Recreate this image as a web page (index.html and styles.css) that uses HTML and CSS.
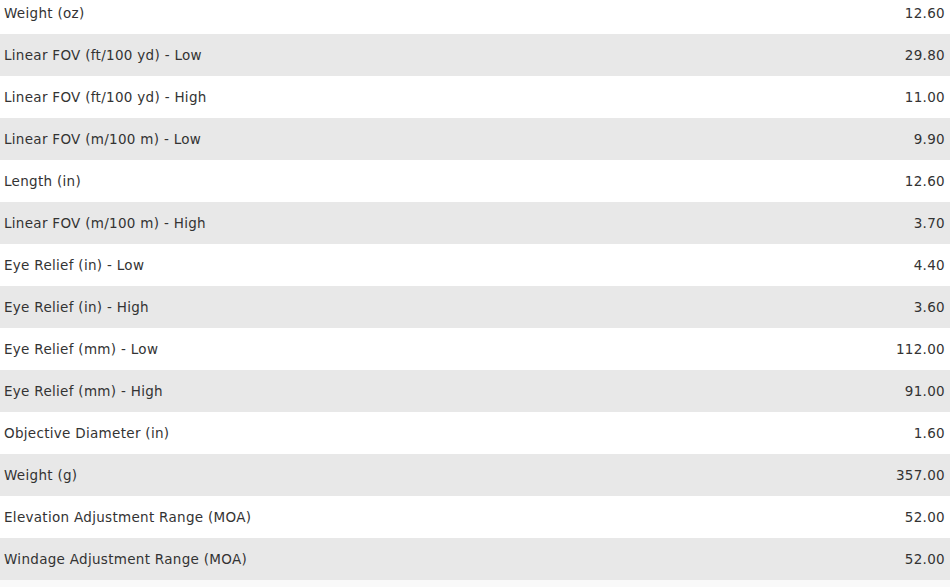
FILE: index.html
```html
<!DOCTYPE html>
<html>
<head>
<meta charset="utf-8">
<link rel="stylesheet" href="styles.css">
</head>
<body>
<div class="specs">
  <div class="row"><span class="label">Weight (oz)</span><span class="value">12.60</span></div>
  <div class="row"><span class="label">Linear FOV (ft/100 yd) - Low</span><span class="value">29.80</span></div>
  <div class="row"><span class="label">Linear FOV (ft/100 yd) - High</span><span class="value">11.00</span></div>
  <div class="row"><span class="label">Linear FOV (m/100 m) - Low</span><span class="value">9.90</span></div>
  <div class="row"><span class="label">Length (in)</span><span class="value">12.60</span></div>
  <div class="row"><span class="label">Linear FOV (m/100 m) - High</span><span class="value">3.70</span></div>
  <div class="row"><span class="label">Eye Relief (in) - Low</span><span class="value">4.40</span></div>
  <div class="row"><span class="label">Eye Relief (in) - High</span><span class="value">3.60</span></div>
  <div class="row"><span class="label">Eye Relief (mm) - Low</span><span class="value">112.00</span></div>
  <div class="row"><span class="label">Eye Relief (mm) - High</span><span class="value">91.00</span></div>
  <div class="row"><span class="label">Objective Diameter (in)</span><span class="value">1.60</span></div>
  <div class="row"><span class="label">Weight (g)</span><span class="value">357.00</span></div>
  <div class="row"><span class="label">Elevation Adjustment Range (MOA)</span><span class="value">52.00</span></div>
  <div class="row"><span class="label">Windage Adjustment Range (MOA)</span><span class="value">52.00</span></div>
  <div class="row"><span class="label"></span><span class="value"></span></div>
</div>
</body>
</html>
```
FILE: styles.css
```css
html, body {
  margin: 0;
  padding: 0;
  background: #ffffff;
  overflow: hidden;
}
.specs {
  margin-top: -8px;
  font-family: "DejaVu Sans", "Open Sans", sans-serif;
  font-size: 13.5px;
  letter-spacing: 0.3px;
  color: #333333;
}
.row {
  height: 42px;
  box-sizing: border-box;
  display: flex;
  align-items: center;
  justify-content: space-between;
  padding: 0 5px 1px 4px;
  background: #ffffff;
}
.row:nth-child(even) {
  background: #e8e8e8;
}
.row:last-child {
  background: #f9f9f9;
}
```
